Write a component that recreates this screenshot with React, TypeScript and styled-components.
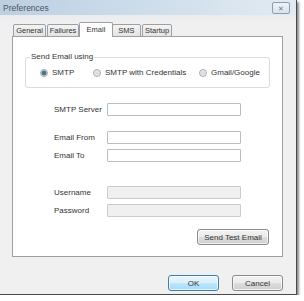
import React from 'react';
import styled, { createGlobalStyle } from 'styled-components';

const GlobalStyle = createGlobalStyle`
  html, body {
    margin: 0;
    padding: 0;
    background: #ffffff;
  }
  body {
    font-family: 'Liberation Sans', Arial, sans-serif;
    font-size: 8px;
    color: #2a2a2a;
  }
`;

const Window = styled.div`
  width: 297px;
  height: 295px;
  background: #f0f0f0;
  border-right: 1px solid #4a4a4a;
  border-bottom: 1px solid #4a4a4a;
  box-shadow: 2px 2px 2px rgba(0, 0, 0, 0.45);
  display: flex;
  flex-direction: column;
  box-sizing: border-box;
`;

const TitleBar = styled.div`
  height: 15px;
  flex: none;
  display: flex;
  align-items: center;
  justify-content: space-between;
  padding: 0 6px 0 3px;
  background: linear-gradient(to right, #bccfe2 0%, #d2e0ec 60%, #e2ebf3 100%);
`;

const Title = styled.span`
  font-size: 8.5px;
  color: #4a5560;
`;

const CloseButton = styled.div`
  width: 16px;
  height: 10px;
  margin-top: 1px;
  border: 1px solid #8e9caa;
  border-radius: 2px;
  background: linear-gradient(#eef3f7, #d9e3ec);
  display: flex;
  align-items: center;
  justify-content: center;
  font-size: 7px;
  line-height: 1;
  color: #6f7c88;
`;

const Body = styled.div`
  flex: 1;
  display: flex;
  flex-direction: column;
  padding: 7px 13px 0 12px;
  background: linear-gradient(#e9ecef 0px, #f0f0f0 8px);
`;

const TabStrip = styled.div`
  display: flex;
  align-items: flex-end;
  height: 15px;
  padding-left: 1px;
`;

const Tab = styled.div<{ active?: boolean; w: number }>`
  width: ${({ w }) => w}px;
  height: ${({ active }) => (active ? 15 : 13)}px;
  box-sizing: border-box;
  border: 1px solid #9aa0a6;
  border-bottom: ${({ active }) => (active ? 'none' : '1px solid #9aa0a6')};
  border-radius: 2px 2px 0 0;
  margin-right: ${({ active }) => (active ? '-1px' : '1px')};
  margin-left: ${({ active }) => (active ? '-1px' : '0')};
  background: ${({ active }) =>
    active ? '#ffffff' : 'linear-gradient(#f4f4f4, #e4e4e4)'};
  display: flex;
  align-items: center;
  justify-content: center;
  font-size: 7.5px;
  color: #333;
  position: relative;
  z-index: ${({ active }) => (active ? 1 : 0)};
  padding-bottom: ${({ active }) => (active ? '2px' : '0')};
`;

const Panel = styled.div`
  height: 221px;
  box-sizing: border-box;
  border: 1px solid #9aa0a6;
  background: #ffffff;
  display: flex;
  flex-direction: column;
  margin-top: -1px;
`;

const GroupBox = styled.div`
  position: relative;
  margin: 20px 12px 0 12px;
  height: 31px;
  box-sizing: border-box;
  border: 1px solid #d6dde3;
  border-radius: 3px;
  display: flex;
  align-items: center;
  padding-left: 14px;
`;

const GroupLabel = styled.span`
  position: absolute;
  top: -6px;
  left: 4px;
  padding: 0 1px;
  background: #ffffff;
  font-size: 8px;
  color: #333;
`;

const RadioItem = styled.label<{ w?: number }>`
  display: flex;
  align-items: center;
  gap: 4px;
  width: ${({ w }) => (w ? `${w}px` : 'auto')};
  font-size: 8px;
  color: #333;
`;

const RadioDot = styled.span<{ checked?: boolean }>`
  width: 8px;
  height: 8px;
  border-radius: 50%;
  box-sizing: border-box;
  border: 1px solid #a7adb3;
  background: ${({ checked }) =>
    checked
      ? 'radial-gradient(circle, #3c6e7e 0, #4d7f8f 2px, #d8e0e6 3px)'
      : 'radial-gradient(circle, #d6d9dc 0, #e9ebed 3px)'};
`;

const Form = styled.div`
  display: flex;
  flex-direction: column;
  padding-left: 41px;
`;

const Row = styled.div<{ top: number }>`
  display: flex;
  align-items: center;
  margin-top: ${({ top }) => top}px;
`;

const Label = styled.span`
  width: 53px;
  font-size: 8px;
  color: #333;
`;

const Input = styled.div<{ disabled?: boolean }>`
  width: 134px;
  height: 13px;
  box-sizing: border-box;
  border: 1px solid ${({ disabled }) => (disabled ? '#c9cbcd' : '#b9bcc0')};
  border-radius: 1px;
  background: ${({ disabled }) => (disabled ? '#f0f0f0' : '#ffffff')};
`;

const ButtonRow = styled.div<{ top: number; right: number }>`
  display: flex;
  justify-content: flex-end;
  gap: 13px;
  margin-top: ${({ top }) => top}px;
  padding-right: ${({ right }) => right}px;
`;

const Button = styled.div<{ w: number; primary?: boolean }>`
  width: ${({ w }) => w}px;
  height: 16px;
  box-sizing: border-box;
  border: 1px solid ${({ primary }) => (primary ? '#3c7fb1' : '#8a8a8a')};
  border-radius: 3px;
  background: ${({ primary }) =>
    primary
      ? 'linear-gradient(#eaf6fd 0%, #d9f0fc 50%, #bee6fd 51%, #a7d9f5 100%)'
      : 'linear-gradient(#f2f2f2 0%, #ebebeb 50%, #dddddd 51%, #cfcfcf 100%)'};
  box-shadow: inset 0 0 0 1px rgba(255, 255, 255, 0.7);
  display: flex;
  align-items: center;
  justify-content: center;
  font-size: 8px;
  color: #333;
`;

export default function App() {
  return (
    <>
      <GlobalStyle />
      <Window>
        <TitleBar>
          <Title>Preferences</Title>
          <CloseButton>✕</CloseButton>
        </TitleBar>
        <Body>
          <TabStrip>
            <Tab w={33}>General</Tab>
            <Tab w={32}>Failures</Tab>
            <Tab w={34} active>Email</Tab>
            <Tab w={29}>SMS</Tab>
            <Tab w={30}>Startup</Tab>
          </TabStrip>
          <Panel>
            <GroupBox>
              <GroupLabel>Send Email using</GroupLabel>
              <RadioItem w={53}>
                <RadioDot checked />
                SMTP
              </RadioItem>
              <RadioItem w={106}>
                <RadioDot />
                SMTP with Credentials
              </RadioItem>
              <RadioItem>
                <RadioDot />
                Gmail/Google
              </RadioItem>
            </GroupBox>
            <Form>
              <Row top={15}>
                <Label>SMTP Server</Label>
                <Input />
              </Row>
              <Row top={15}>
                <Label>Email From</Label>
                <Input />
              </Row>
              <Row top={5}>
                <Label>Email To</Label>
                <Input />
              </Row>
              <Row top={24}>
                <Label>Username</Label>
                <Input disabled />
              </Row>
              <Row top={5}>
                <Label>Password</Label>
                <Input disabled />
              </Row>
            </Form>
            <ButtonRow top={12} right={13}>
              <Button w={72}>Send Test Email</Button>
            </ButtonRow>
          </Panel>
          <ButtonRow top={18} right={0}>
            <Button w={51} primary>OK</Button>
            <Button w={51}>Cancel</Button>
          </ButtonRow>
        </Body>
      </Window>
    </>
  );
}
